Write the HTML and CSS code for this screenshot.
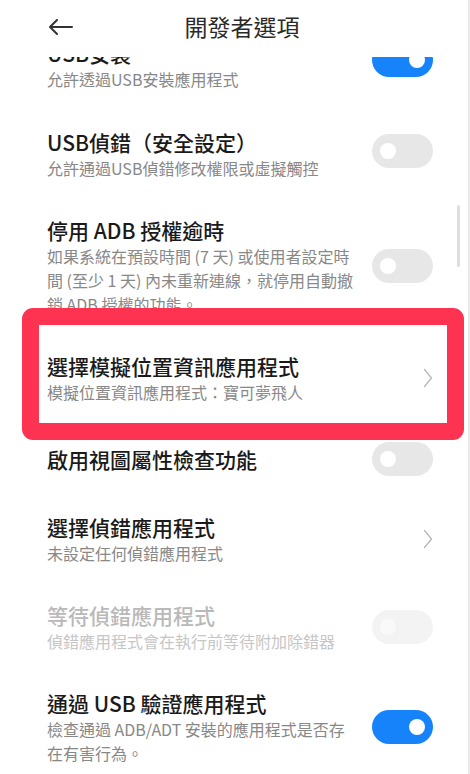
FILE: index.html
```html
<!DOCTYPE html>
<html lang="zh-Hant">
<head>
<meta charset="utf-8">
<title>開發者選項</title>
<link rel="stylesheet" href="styles.css">
</head>
<body>
<div class="screen">
  <header class="topbar">
    <svg class="back" width="25" height="16" viewBox="0 0 25 16" aria-hidden="true">
      <path d="M24 8H2M9 1L2 8l7 7" fill="none" stroke="#333" stroke-width="2" stroke-linecap="round" stroke-linejoin="round"/>
    </svg>
    <h1 class="title">開發者選項</h1>
    <span class="spacer"></span>
  </header>
  <div class="viewport">
    <div class="list">
      <div class="item">
        <div class="text">
          <div class="name">USB安裝</div>
          <div class="desc">允許透過USB安裝應用程式</div>
        </div>
        <div class="ctrl raise-more"><span class="toggle on"><span class="knob"></span></span></div>
      </div>
      <div class="item">
        <div class="text">
          <div class="name">USB偵錯（安全設定）</div>
          <div class="desc">允許通過USB偵錯修改權限或虛擬觸控</div>
        </div>
        <div class="ctrl raise"><span class="toggle"><span class="knob"></span></span></div>
      </div>
      <div class="item">
        <div class="text">
          <div class="name">停用 ADB 授權逾時</div>
          <div class="desc">如果系統在預設時間 (7 天) 或使用者設定時<br>間 (至少 1 天) 內未重新連線，就停用自動撤<br>銷 ADB 授權的功能。</div>
        </div>
        <div class="ctrl"><span class="toggle"><span class="knob"></span></span></div>
      </div>
      <div class="item marked">
        <div class="text">
          <div class="name">選擇模擬位置資訊應用程式</div>
          <div class="desc">模擬位置資訊應用程式：寶可夢飛人</div>
        </div>
        <div class="ctrl">
          <svg class="chev" width="10" height="20" viewBox="0 0 10 20" aria-hidden="true"><path d="M1.5 1.5L8.5 10l-7 8.5" fill="none" stroke="#b8b8b8" stroke-width="1.3" stroke-linecap="round" stroke-linejoin="round"/></svg>
        </div>
        <div class="highlight"></div>
      </div>
      <div class="item single">
        <div class="text">
          <div class="name">啟用視圖屬性檢查功能</div>
        </div>
        <div class="ctrl"><span class="toggle"><span class="knob"></span></span></div>
      </div>
      <div class="item">
        <div class="text">
          <div class="name">選擇偵錯應用程式</div>
          <div class="desc">未設定任何偵錯應用程式</div>
        </div>
        <div class="ctrl">
          <svg class="chev" width="10" height="20" viewBox="0 0 10 20" aria-hidden="true"><path d="M1.5 1.5L8.5 10l-7 8.5" fill="none" stroke="#b8b8b8" stroke-width="1.3" stroke-linecap="round" stroke-linejoin="round"/></svg>
        </div>
      </div>
      <div class="item disabled">
        <div class="text">
          <div class="name">等待偵錯應用程式</div>
          <div class="desc">偵錯應用程式會在執行前等待附加除錯器</div>
        </div>
        <div class="ctrl"><span class="toggle"><span class="knob"></span></span></div>
      </div>
      <div class="item">
        <div class="text">
          <div class="name">通過 USB 驗證應用程式</div>
          <div class="desc">檢查通過 ADB/ADT 安裝的應用程式是否存<br>在有害行為。</div>
        </div>
        <div class="ctrl"><span class="toggle on"><span class="knob"></span></span></div>
      </div>
    </div>
    <div class="scrollbar"></div>
  </div>
</div>
</body>
</html>
```

FILE: styles.css
```css
html, body {
  margin: 0;
  padding: 0;
  background: #ffffff;
}

body {
  font-family: "Noto Sans CJK TC", "Noto Sans", "Liberation Sans", sans-serif;
  color: #1f1f1f;
}

.screen {
  width: 468px;
  height: 774px;
  border-right: 2px solid #e9e9e9;
  display: flex;
  flex-direction: column;
  overflow: hidden;
  background: #fff;
}

.topbar {
  flex: 0 0 57px;
  box-sizing: border-box;
  display: grid;
  grid-template-columns: 25px 1fr 25px;
  align-items: center;
  padding: 0 32px 5px 48px;
  background: #fff;
}

.back {
  display: block;
  margin-top: 1px;
}

.title {
  margin: 0;
  text-align: center;
  font-size: 23px;
  font-weight: 400;
  line-height: 30px;
  color: #2a2a2a;
}

.viewport {
  flex: 1;
  position: relative;
  overflow: hidden;
}

.list {
  margin-top: -36px;
  display: flex;
  flex-direction: column;
}

.item {
  position: relative;
  display: flex;
  align-items: center;
  gap: 12px;
  padding: 18px 35px 18px 47px;
}

.item:first-child {
  padding-bottom: 19px;
}

.item.single {
  min-height: 73px;
  box-sizing: border-box;
}

.text {
  flex: 1;
  min-width: 0;
}

.name {
  font-size: 21px;
  line-height: 28px;
  font-weight: 500;
  color: #1a1a1a;
  white-space: nowrap;
}

.desc {
  font-size: 16px;
  line-height: 24px;
  color: #888888;
  white-space: nowrap;
}

.disabled .name {
  color: #b9b9b9;
}

.disabled .desc {
  color: #c6c6c6;
}

.ctrl {
  flex: 0 0 61px;
  display: flex;
  justify-content: flex-end;
  align-items: center;
}

.ctrl.raise {
  margin-top: -6px;
}

.ctrl.raise-more {
  margin-top: -10px;
}

.toggle {
  width: 61px;
  height: 34px;
  border-radius: 17px;
  background: #e7e7e7;
  display: flex;
  align-items: center;
  padding: 0 8px;
  box-sizing: border-box;
}

.knob {
  width: 16px;
  height: 16px;
  border-radius: 50%;
  background: #ffffff;
}

.toggle.on {
  background: #1683fb;
  justify-content: flex-end;
}

.disabled .toggle {
  background: #f3f3f3;
}

.disabled .knob {
  background: #f9f9f9;
}

.chev {
  display: block;
}

.highlight {
  position: absolute;
  top: -26px;
  bottom: -18px;
  left: 22px;
  right: 4px;
  border: 17px solid #fe3352;
  border-radius: 11px;
  pointer-events: none;
}

.scrollbar {
  position: absolute;
  top: 148px;
  right: 8px;
  width: 3px;
  height: 62px;
  border-radius: 2px;
  background: #dedede;
}
```
